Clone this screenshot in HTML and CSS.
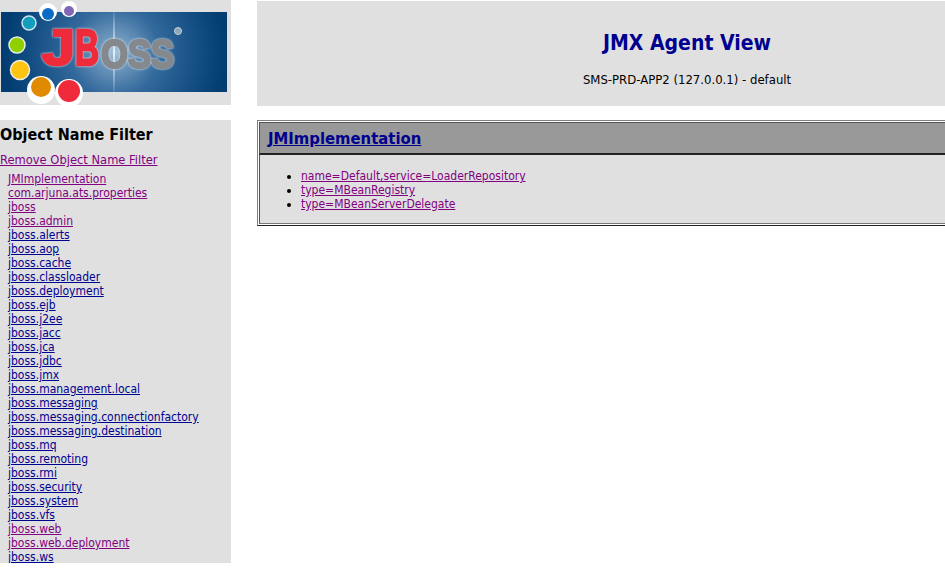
FILE: index.html
```html
<!DOCTYPE html>
<html>
<head lang="en">
    <meta charset="UTF-8">
    <title>JMX Agent View</title>
    <link rel="stylesheet" href="styles.css">
</head>
<body>
<div id="container">
    <div id="left">
        <div id="logo">
            <svg class="logo-svg" width="231" height="106" viewBox="0 0 231 106">
                <defs>
                    <radialGradient id="glow" gradientUnits="userSpaceOnUse" cx="115" cy="52" r="112">
                        <stop offset="0" stop-color="#a9c6dd"/>
                        <stop offset="0.14" stop-color="#6e98bd"/>
                        <stop offset="0.4" stop-color="#33699c"/>
                        <stop offset="0.8" stop-color="#0f4a80"/>
                        <stop offset="1" stop-color="#023c70"/>
                    </radialGradient>
                    <linearGradient id="streak" x1="0" y1="0" x2="0" y2="1">
                        <stop offset="0" stop-color="#fff" stop-opacity="0.1"/>
                        <stop offset="0.5" stop-color="#fff" stop-opacity="0.7"/>
                        <stop offset="1" stop-color="#fff" stop-opacity="0.1"/>
                    </linearGradient>
                </defs>
                <rect x="1" y="12" width="226" height="80" fill="url(#glow)"/>
                <rect x="113" y="12" width="2" height="80" fill="url(#streak)"/>
                <circle cx="178" cy="31" r="3.5" fill="#8fa5b8" stroke="#c4d2de"/>
                <!-- white halos sit under the balls, offset away from the banner -->
                <circle cx="48" cy="12" r="9" fill="#fff"/>
                <circle cx="69" cy="9" r="8" fill="#fff"/>
                <circle cx="41" cy="90" r="14" fill="#fff"/>
                <circle cx="69" cy="93" r="14" fill="#fff"/>
                <circle cx="48" cy="14" r="6" fill="#0a6cc4"/>
                <circle cx="69" cy="11" r="5" fill="#7f67b5"/>
                <circle cx="29" cy="23" r="7" fill="#129fbe" stroke="#cfe3ee" stroke-width="1.5"/>
                <circle cx="17" cy="45" r="8" fill="#8fd000" stroke="#e8f0e8" stroke-width="1.5"/>
                <circle cx="20" cy="70" r="9.5" fill="#fdc414" stroke="#f0eee0" stroke-width="1.5"/>
                <circle cx="41" cy="87" r="10" fill="#e08a00"/>
                <circle cx="69" cy="91" r="11" fill="#ef2b3b"/>
                <text x="42" y="65" class="logo-j" textLength="33" lengthAdjust="spacingAndGlyphs">J</text>
                <text x="75" y="65" class="logo-j" textLength="24" lengthAdjust="spacingAndGlyphs">B</text>
                <text x="101" y="68" class="logo-oss" textLength="73" lengthAdjust="spacingAndGlyphs">OSS</text>
            </svg>
        </div>
        <div id="filter">
            <h2>Object Name Filter</h2>
            <p class="remove"><a class="seen" href="#">Remove Object Name Filter</a></p>
            <ul id="domains">
                <li><a class="seen" href="#">JMImplementation</a></li>
                <li><a class="seen" href="#">com.arjuna.ats.properties</a></li>
                <li><a class="seen" href="#">jboss</a></li>
                <li><a class="seen" href="#">jboss.admin</a></li>
                <li><a href="#">jboss.alerts</a></li>
                <li><a href="#">jboss.aop</a></li>
                <li><a href="#">jboss.cache</a></li>
                <li><a href="#">jboss.classloader</a></li>
                <li><a href="#">jboss.deployment</a></li>
                <li><a href="#">jboss.ejb</a></li>
                <li><a href="#">jboss.j2ee</a></li>
                <li><a href="#">jboss.jacc</a></li>
                <li><a href="#">jboss.jca</a></li>
                <li><a href="#">jboss.jdbc</a></li>
                <li><a href="#">jboss.jmx</a></li>
                <li><a href="#">jboss.management.local</a></li>
                <li><a href="#">jboss.messaging</a></li>
                <li><a href="#">jboss.messaging.connectionfactory</a></li>
                <li><a href="#">jboss.messaging.destination</a></li>
                <li><a href="#">jboss.mq</a></li>
                <li><a href="#">jboss.remoting</a></li>
                <li><a href="#">jboss.rmi</a></li>
                <li><a href="#">jboss.security</a></li>
                <li><a href="#">jboss.system</a></li>
                <li><a href="#">jboss.vfs</a></li>
                <li><a class="seen" href="#">jboss.web</a></li>
                <li><a class="seen" href="#">jboss.web.deployment</a></li>
                <li><a href="#">jboss.ws</a></li>
            </ul>
        </div>
    </div>
    <div id="right">
        <div id="header">
            <h1>JMX Agent View</h1>
            <p>SMS-PRD-APP2 (127.0.0.1) - default</p>
        </div>
        <div id="domain">
            <div id="domain-title"><a href="#">JMImplementation</a></div>
            <ul id="beans">
                <li><a class="seen" href="#">name=Default,service=LoaderRepository</a></li>
                <li><a class="seen" href="#">type=MBeanRegistry</a></li>
                <li><a class="seen" href="#">type=MBeanServerDelegate</a></li>
            </ul>
        </div>
    </div>
</div>
</body>
</html>
```

FILE: styles.css
```css
* {
    margin: 0;
    padding: 0;
}
html, body {
    height: 573px;
    overflow: hidden;
    background: #fff;
}
body {
    font-family: "DejaVu Sans Condensed", "DejaVu Sans", sans-serif;
    font-size: 12px;
    color: #000;
}
ul {
    list-style: none;
}
a {
    color: #000090;
}
a.seen {
    color: #800080;
}
#container {
    display: flex;
    align-items: flex-start;
    gap: 26px;
    padding-top: 1px;
    width: 945px;
    overflow: hidden;
}
#left {
    width: 231px;
    flex: none;
}
#logo {
    height: 105px;
    background: #e0e0e0;
    margin-bottom: 15px;
}
.logo-svg {
    display: block;
    margin-top: -1px;
}
.logo-j {
    font: bold 50px "Liberation Sans", sans-serif;
    fill: #ef2b3b;
    stroke: #ef2b3b;
    stroke-width: 2.5px;
    filter: drop-shadow(0 0 1px #e8eef4);
}
.logo-oss {
    font: bold 41px "Liberation Sans", sans-serif;
    fill: #85898d;
    stroke: #85898d;
    stroke-width: 2.5px;
    filter: drop-shadow(0 0 1px #e8eef4);
}
#filter {
    background: #e0e0e0;
    height: 443px;
}
#filter h2 {
    font-size: 16px;
    line-height: 19px;
    padding-top: 5px;
}
.remove {
    font-size: 12.8px;
    line-height: 14px;
    margin-top: 9px;
}
#domains {
    padding-left: 8px;
    margin-top: 5px;
}
#domains li {
    height: 14px;
    line-height: 14px;
    white-space: nowrap;
}
#right {
    flex: none;
    width: 860px;
}
#header {
    height: 105px;
    background: #e0e0e0;
    text-align: center;
    margin-bottom: 14px;
}
#header h1 {
    font-size: 21px;
    line-height: 24px;
    color: #000090;
    padding-top: 30px;
}
#header p {
    font-size: 13px;
    line-height: 14px;
    margin-top: 18px;
}
#domain {
    border: 1px solid #808080;
    border-bottom-color: #222;
    padding: 1px;
    background: #fff;
}
#domain-title {
    background: #999;
    border: 1px solid #555;
    border-bottom: 2px solid #222;
    height: 30px;
    line-height: 31px;
    padding-left: 8px;
    font-size: 16.5px;
    font-weight: bold;
}
#beans {
    list-style: disc;
    background: #e0e0e0;
    padding: 14px 0 12px 41px;
    border-left: 1px solid #555;
    border-bottom: 1px solid #777;
    height: 42px;
}
#beans li {
    line-height: 14px;
}
```
